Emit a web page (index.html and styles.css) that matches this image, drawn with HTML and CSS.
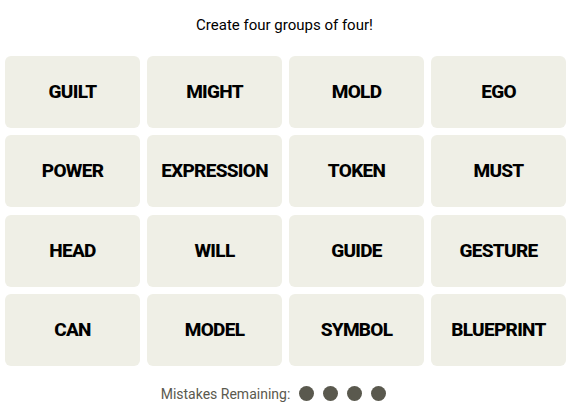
FILE: index.html
```html
<!DOCTYPE html>
<html>
<head>
<meta charset="utf-8">
<link rel="stylesheet" href="styles.css">
</head>
<body>
<main class="game">
  <p class="prompt">Create four groups of four!</p>
  <section class="board">
    <button class="tile">GUILT</button>
    <button class="tile">MIGHT</button>
    <button class="tile">MOLD</button>
    <button class="tile">EGO</button>
    <button class="tile">POWER</button>
    <button class="tile">EXPRESSION</button>
    <button class="tile">TOKEN</button>
    <button class="tile">MUST</button>
    <button class="tile">HEAD</button>
    <button class="tile">WILL</button>
    <button class="tile">GUIDE</button>
    <button class="tile">GESTURE</button>
    <button class="tile">CAN</button>
    <button class="tile">MODEL</button>
    <button class="tile">SYMBOL</button>
    <button class="tile">BLUEPRINT</button>
  </section>
  <div class="mistakes">
    <span class="mistakes-label">Mistakes Remaining:</span>
    <span class="dots">
      <span class="dot"></span><span class="dot"></span><span class="dot"></span><span class="dot"></span>
    </span>
  </div>
</main>
</body>
</html>
```

FILE: styles.css
```css
html, body {
  margin: 0;
  padding: 0;
  background: #ffffff;
}
.game {
  width: 569px;
  font-family: Roboto, "Liberation Sans", sans-serif;
  color: #121212;
}
.prompt {
  margin: 0;
  padding-top: 16px;
  height: 40px;
  box-sizing: border-box;
  text-align: center;
  font-size: 15px;
  line-height: 18px;
  color: #000;
}
.board {
  display: grid;
  grid-template-columns: repeat(4, 135px);
  grid-auto-rows: 72px;
  column-gap: 7px;
  row-gap: 7.33px;
  margin-top: 16px;
  padding-left: 5px;
}
.tile {
  border: none;
  border-radius: 6px;
  background: #efefe6;
  font-family: Roboto, "Liberation Sans", sans-serif;
  font-weight: 800;
  font-size: 19px;
  color: #000;
  display: flex;
  align-items: center;
  justify-content: center;
  padding: 0 0 1px 0;
  letter-spacing: -0.7px;
}
.mistakes {
  display: flex;
  align-items: center;
  justify-content: center;
  gap: 9px;
  margin-top: 20px;
  padding-right: 22px;
  height: 16px;
}
.mistakes-label {
  font-size: 14px;
  color: #5a594e;
}
.dots {
  display: flex;
  gap: 9px;
}
.dot {
  width: 15px;
  height: 15px;
  border-radius: 50%;
  background: #5a594e;
}
```
